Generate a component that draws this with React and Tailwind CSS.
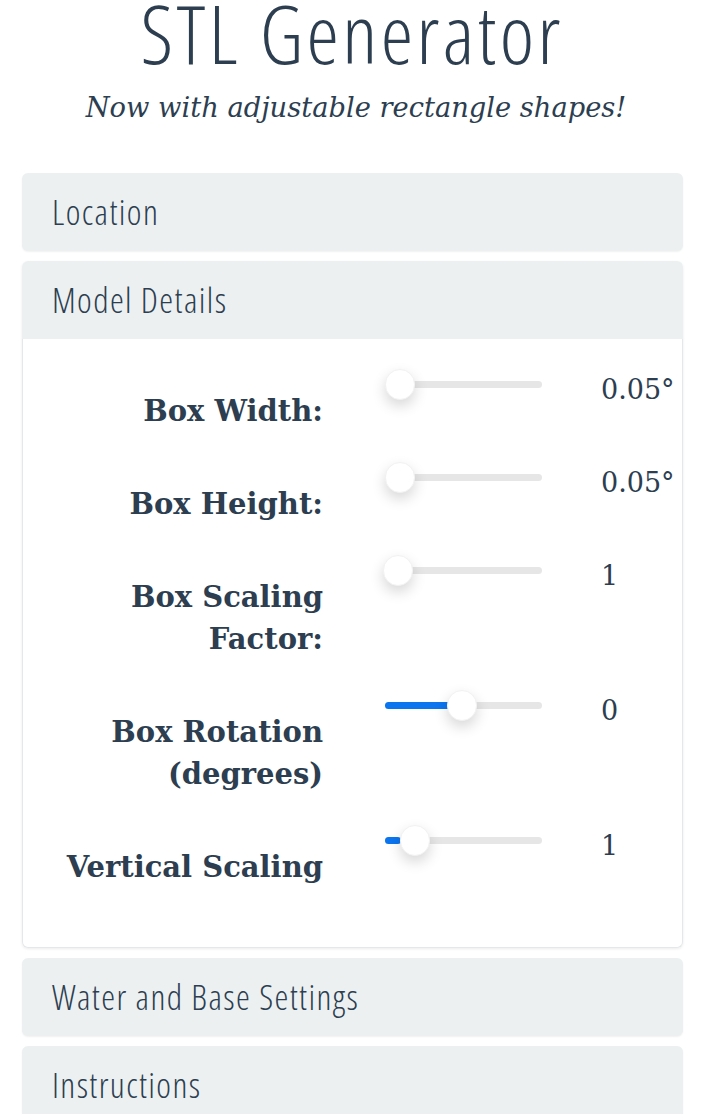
import React from "react";

const rows = [
  { label: ["Box Width:"], value: "0.05°", thumb: 15, fill: 0 },
  { label: ["Box Height:"], value: "0.05°", thumb: 15, fill: 0 },
  { label: ["Box Scaling", "Factor:"], value: "1", thumb: 13, fill: 0 },
  { label: ["Box Rotation", "(degrees)"], value: "0", thumb: 77, fill: 71 },
  { label: ["Vertical Scaling"], value: "1", thumb: 30, fill: 16 },
];

function Slider({ thumb, fill }) {
  return (
    <div className="relative w-[157px] h-[30px] shrink-0">
      <div className="absolute left-0 right-0 top-[12px] h-[7px] rounded-full bg-[#e6e6e6]" />
      {fill > 0 && (
        <div
          className="absolute left-0 top-[12px] h-[7px] rounded-full bg-[#0b74ef]"
          style={{ width: fill }}
        />
      )}
      <div
        className="absolute top-0 w-[30px] h-[31px] rounded-full bg-white shadow-[0_6px_14px_rgba(0,0,0,0.16)] border border-[#f2f2f2]"
        style={{ left: thumb - 15 }}
      />
    </div>
  );
}

function Header({ children, open }) {
  return (
    <div
      className={
        "h-[78px] flex items-center pl-[30px] bg-[#ecf0f1] text-[35px] tracking-[1.4px] font-light [font-stretch:75%] font-['Open_Sans',sans-serif] " +
        (open ? "rounded-t-[6px]" : "rounded-[6px] shadow-[0_1px_2px_rgba(0,0,0,0.06)]")
      }
    >
      {children}
    </div>
  );
}

export default function App() {
  return (
    <div className="bg-white min-h-screen text-[#2c3e50] overflow-hidden">
      <h1 className="text-center text-[82px] leading-[1.1] mt-[-13px] pr-[8px] tracking-[3.4px] font-light [font-stretch:75%] font-['Open_Sans',sans-serif]">
        STL Generator
      </h1>
      <p className="text-center italic text-[27.3px] leading-[40px] mt-[11px] font-['DejaVu_Serif',serif]">
        Now with adjustable rectangle shapes!
      </p>
      <div className="ml-[22px] w-[661px] mt-[45px] flex flex-col gap-[10px]">
        <Header>Location</Header>
        <div className="shadow-[0_1px_3px_rgba(0,0,0,0.08)] rounded-[6px]">
          <Header open>Model Details</Header>
          <div className="border border-t-0 border-[#e4e8ea] rounded-b-[6px] pt-[30px] pb-[59px] flex flex-col gap-[30px] font-['DejaVu_Serif',serif]">
            {rows.map((r, i) => (
              <div key={i} className="flex items-start">
                <div className="w-[300px] shrink-0 text-right font-bold text-[29px] leading-[42px] mt-[21px]">
                  {r.label.map((l, j) => (
                    <div key={j}>{l}</div>
                  ))}
                </div>
                <div className="ml-[62px]">
                  <Slider thumb={r.thumb} fill={r.fill} />
                </div>
                <div className="ml-[59px] text-[27px] leading-[42px] whitespace-nowrap">
                  {r.value}
                </div>
              </div>
            ))}
          </div>
        </div>
        <Header>Water and Base Settings</Header>
        <Header>Instructions</Header>
      </div>
    </div>
  );
}
